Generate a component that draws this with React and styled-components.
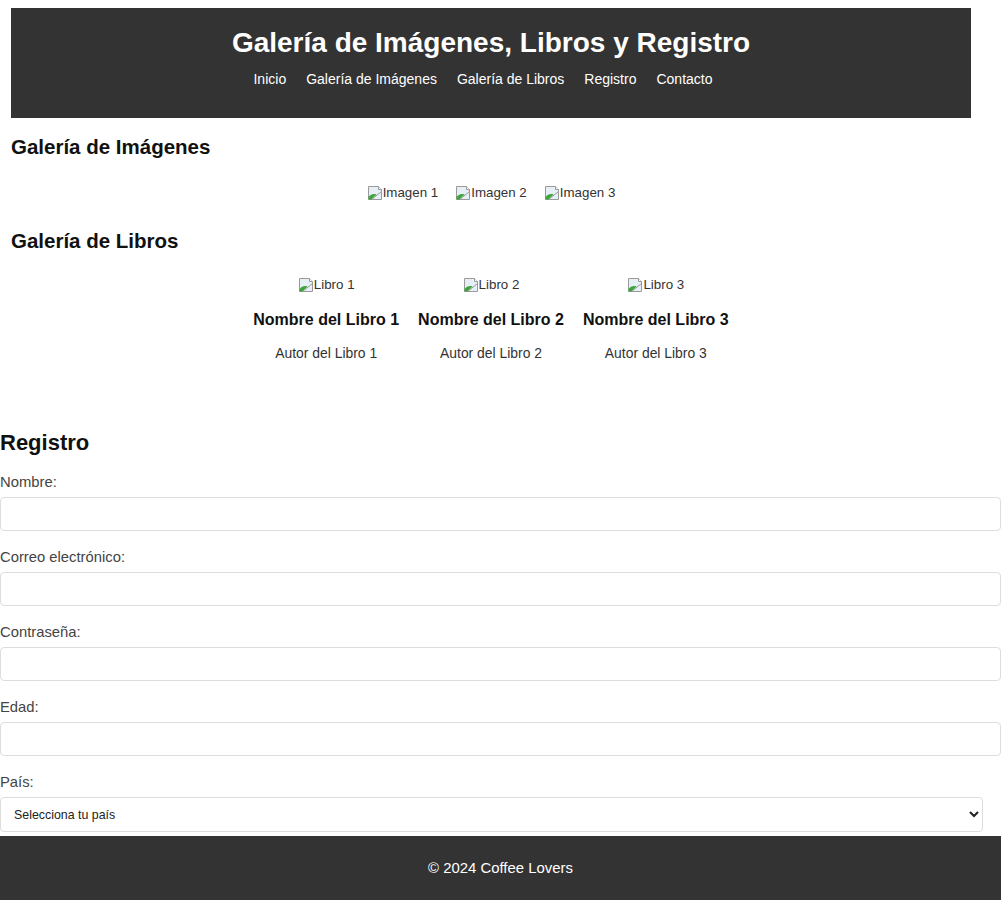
import React from "react";
import styled, { createGlobalStyle } from "styled-components";

const GlobalStyle = createGlobalStyle`
  html, body {
    margin: 0;
    padding: 0;
    background: #fff;
  }
  body {
    font-family: "Liberation Sans", Arial, sans-serif;
    color: #222;
  }
`;

const Page = styled.div`
  width: 1001px;
  padding-bottom: 8px;
`;

const Header = styled.header`
  width: 960px;
  margin: 8px 0 0 11px;
  padding: 20px 0 30px;
  background: #333;
  color: #fff;
  text-align: center;
`;

const Title = styled.h1`
  margin: 0;
  font-size: 28px;
  line-height: 30px;
  font-weight: bold;
`;

const Nav = styled.nav`
  margin-top: 12px;
  padding-right: 16px;
  display: flex;
  justify-content: center;
  gap: 20px;
  font-size: 14px;
  line-height: 18px;
`;

const NavLink = styled.a`
  color: #fff;
  text-decoration: none;
`;

const Gallery = styled.section`
  width: 960px;
  margin-left: 11px;
`;

const Register = styled.section`
  width: 1001px;
`;

const SectionTitle = styled.h2`
  margin: ${(p) => p.$top}px 0 0;
  font-size: ${(p) => p.$size || 20.5}px;
  line-height: ${(p) => p.$line || 24}px;
  font-weight: bold;
  color: #111;
`;

const ImageRow = styled.div`
  margin-top: 25px;
  display: flex;
  justify-content: center;
  gap: 17px;
`;

const Broken = styled.span`
  display: inline-flex;
  align-items: center;
  font-size: 13.33px;
  line-height: 18px;
  color: #333;
  svg {
    flex: none;
  }
`;

const BookRow = styled.div`
  display: flex;
  justify-content: center;
  gap: 19px;
`;

const Book = styled.div`
  display: flex;
  flex-direction: column;
  align-items: center;
  text-align: center;
  padding-top: 23px;
`;

const BookName = styled.h3`
  margin: 16px 0 0;
  font-size: 16px;
  line-height: 20px;
  font-weight: bold;
  color: #111;
`;

const BookAuthor = styled.p`
  margin: 14px 0 0;
  font-size: 13.9px;
  line-height: 18px;
  color: #333;
`;

const Form = styled.form`
  margin-top: 18px;
`;

const Label = styled.label`
  display: block;
  font-size: 14.8px;
  line-height: 17px;
  color: #444;
  margin-bottom: 6px;
`;

const Input = styled.input`
  display: block;
  box-sizing: border-box;
  width: 1001px;
  height: 34px;
  margin: 0 0 18px;
  border: 1px solid #ddd;
  border-radius: 4px;
  background: #fff;
  padding: 0 10px;
  font: inherit;
`;

const Select = styled.select`
  display: block;
  box-sizing: border-box;
  width: 983px;
  height: 35px;
  margin: 0;
  border: 1px solid #ddd;
  border-radius: 4px;
  background: #fff;
  padding: 0 9px;
  font-family: "Liberation Sans", Arial, sans-serif;
  font-size: 12.4px;
  color: #222;
`;

const Footer = styled.footer`
  margin-top: 4px;
  height: 64px;
  background: #333;
  color: #fff;
  display: flex;
  align-items: center;
  justify-content: center;
  font-size: 14.9px;
`;

const BrokenIcon = () => (
  <svg width="16" height="16" viewBox="0 0 16 16">
    <path d="M1.5 1.5h10l3 3v10h-13z" fill="#e6eef6" stroke="#9a9a9a" />
    <path d="M11.5 1.5v3h3" fill="#fff" stroke="#9a9a9a" />
    <path d="M1.5 14.5v-2.5c2-2.5 5-3.5 8-2.5l-5 5z" fill="#3da53a" />
    <path d="M4.5 14.5l10-8" stroke="#9a9a9a" fill="none" />
  </svg>
);

const AltImage = ({ alt }) => (
  <Broken>
    <BrokenIcon />
    {alt}
  </Broken>
);

const books = [1, 2, 3];
const fields = [
  { id: "nombre", label: "Nombre:", type: "text" },
  { id: "email", label: "Correo electrónico:", type: "email" },
  { id: "password", label: "Contraseña:", type: "password" },
  { id: "edad", label: "Edad:", type: "number" },
];

export default function App() {
  return (
    <Page>
      <GlobalStyle />
      <Header>
        <Title>Galería de Imágenes, Libros y Registro</Title>
        <Nav>
          <NavLink href="#inicio">Inicio</NavLink>
          <NavLink href="#imagenes">Galería de Imágenes</NavLink>
          <NavLink href="#libros">Galería de Libros</NavLink>
          <NavLink href="#registro">Registro</NavLink>
          <NavLink href="#contacto">Contacto</NavLink>
        </Nav>
      </Header>

      <Gallery>
        <SectionTitle $top={17}>Galería de Imágenes</SectionTitle>
        <ImageRow>
          <AltImage alt="Imagen 1" />
          <AltImage alt="Imagen 2" />
          <AltImage alt="Imagen 3" />
        </ImageRow>
      </Gallery>

      <Gallery>
        <SectionTitle $top={27}>Galería de Libros</SectionTitle>
        <BookRow>
          {books.map((n) => (
            <Book key={n}>
              <AltImage alt={`Libro ${n}`} />
              <BookName>Nombre del Libro {n}</BookName>
              <BookAuthor>Autor del Libro {n}</BookAuthor>
            </Book>
          ))}
        </BookRow>
      </Gallery>

      <Register>
        <SectionTitle $top={68} $size={22} $line={26}>
          Registro
        </SectionTitle>
        <Form onSubmit={(e) => e.preventDefault()}>
          {fields.map((f) => (
            <div key={f.id}>
              <Label htmlFor={f.id}>{f.label}</Label>
              <Input id={f.id} name={f.id} type={f.type} />
            </div>
          ))}
          <Label htmlFor="pais">País:</Label>
          <Select id="pais" name="pais" defaultValue="">
            <option value="">Selecciona tu país</option>
            <option value="es">España</option>
            <option value="mx">México</option>
            <option value="ar">Argentina</option>
          </Select>
        </Form>
      </Register>

      <Footer>© 2024 Coffee Lovers</Footer>
    </Page>
  );
}
